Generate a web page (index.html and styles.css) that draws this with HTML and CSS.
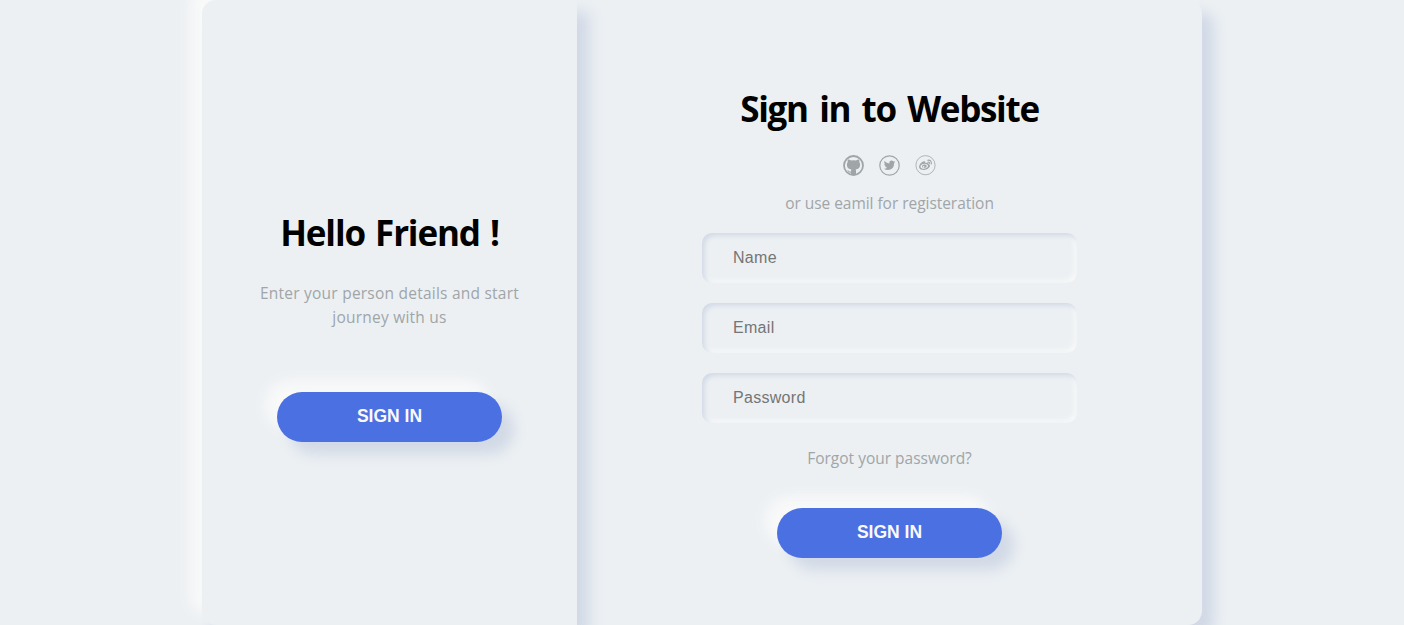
FILE: index.html
```html
<!DOCTYPE html>
<html lang="en">
<head>
<meta charset="utf-8">
<title>Sign in</title>
<link rel="stylesheet" href="styles.css">
</head>
<body>
<main class="shell">
  <section class="welcome">
    <h2 class="title title-welcome">Hello Friend !</h2>
    <p class="description">Enter your person details and start<br>journey with us</p>
    <button class="button" type="button">SIGN IN</button>
  </section>
  <form class="form">
    <h2 class="title title-form">Sign in to Website</h2>
    <div class="icons">
      <svg class="icon" viewBox="0 0 21 21">
        <circle cx="10.5" cy="10.5" r="9.5" fill="none" stroke="currentColor" stroke-width="1.8"/>
        <path fill="currentColor" d="M4.900 4.500Q6.400 4.300 8 5.500Q10.500 5 13 5.500Q14.600 4.300 16.100 4.500Q16.600 5.800 16.300 7Q17.300 8.200 17.100 10.200Q16.700 13.900 12.700 14.500L13 15.700V19.800L10.500 20.300L8 19.800V17.600Q5.900 17.900 4.900 16.100Q4.600 15.500 4 15.300Q5.400 15 6.100 16Q6.800 16.800 8 16.400Q8 15.100 8.400 14.500Q4.300 13.900 3.900 10.200Q3.700 8.200 4.700 7Q4.400 5.800 4.900 4.500Z"/>
      </svg>
      <svg class="icon" viewBox="0 0 21 21">
        <circle cx="10.500" cy="10.500" r="9.700" fill="none" stroke="currentColor" stroke-width="1.200"/>
        <path fill="currentColor" d="M16.200 6.700l-1.300.4q.8-.5 1-1.200l-1.500.5a2.300 2.300 0 0 0-4 2.100Q7.400 8.300 5.500 6Q4.500 7.900 6.200 9.200L5.200 8.900Q5.300 10.600 7.100 11.200L6 11.200Q6.500 12.600 8.200 12.800Q6.700 14 4.800 13.800Q8 15.700 11.400 14.600Q15.200 13.100 15.100 8.100Z"/>
      </svg>
      <svg class="icon" viewBox="0 0 21 21">
        <circle cx="10.500" cy="10.200" r="9.600" fill="none" stroke="currentColor" stroke-width=".8"/>
        <path fill="currentColor" fill-rule="evenodd" d="M8.800 6.300Q10.600 5.800 10.400 8Q13.700 6.900 13.500 9.100Q15.600 9.800 14.600 12Q13.100 14.700 9.200 14.900Q4.300 14.800 4 11.900Q4.500 8 8.800 6.300ZM9.400 8.800C7 8.900 5.400 10.300 5.500 11.700C5.700 13.200 7.200 13.800 9.200 13.700C11.700 13.400 13.200 12.200 13 10.800C12.800 9.400 11.400 8.700 9.400 8.800ZM9.200 9.500C11 9.300 12 10.300 11.600 11.600C11 13 9.300 13.500 7.900 12.800C6.200 11.700 7 9.900 9.200 9.500ZM8.600 10.900A.9.9 0 1 0 8.700 12.700A.9.9 0 0 0 8.600 10.900Z"/>
        <path fill="none" stroke="currentColor" stroke-width="1.1" stroke-linecap="round" d="M12.700 5.200Q16.800 4.700 16.300 9M13 7.100Q14.800 6.900 14.600 8.500"/>
      </svg>
    </div>
    <p class="note">or use eamil for registeration</p>
    <input class="field" type="text" placeholder="Name" aria-label="Name">
    <input class="field" type="text" placeholder="Email" aria-label="Email">
    <input class="field" type="password" placeholder="Password" aria-label="Password">
    <a class="forgot">Forgot your password?</a>
    <button class="button" type="button">SIGN IN</button>
  </form>
</main>
</body>
</html>
```
FILE: styles.css
```css
* { box-sizing: border-box; margin: 0; padding: 0; }
body {
  height: 625px;
  overflow: hidden;
  display: flex;
  justify-content: center;
  background: #ecf0f3;
  color: #a0a5a8;
  font-family: "Open Sans", "Noto Sans", sans-serif;
}
.shell {
  display: flex;
  width: 1000px;
  height: 625px;
  overflow: hidden;
  border-radius: 14px;
  background: #ecf0f3;
  box-shadow: 12px 12px 14px #d1d9e6, -12px -12px 14px #f9f9f9;
}
.welcome {
  display: flex;
  flex-direction: column;
  align-items: center;
  width: 375px;
  height: 625px;
  padding-top: 208px;
  box-shadow: 12px 12px 14px #d1d9e6;
}
.form {
  display: flex;
  flex-direction: column;
  align-items: center;
  width: 625px;
  padding-top: 84px;
}
.title {
  height: 50px;
  line-height: 50px;
  font-size: 35px;
  font-weight: 700;
  color: #000;
  white-space: nowrap;
}
.title-welcome { letter-spacing: -1.15px; word-spacing: 2.2px; }
.title-form { letter-spacing: -1.3px; word-spacing: 3.6px; }
.description {
  margin-top: 23px;
  height: 48px;
  line-height: 24px;
  font-size: 15.5px;
  letter-spacing: 0.23px;
  text-align: center;
  white-space: nowrap;
}
.welcome .button { margin-top: 63px; }
.icons { display: flex; gap: 15px; margin-top: 21px; }
.icon { display: block; width: 21px; height: 21px; }
.note {
  margin: 15px 0 18px;
  height: 24px;
  line-height: 24px;
  font-size: 15.5px;
  letter-spacing: -0.04px;
}
.field {
  width: 375px;
  height: 50px;
  margin-bottom: 20px;
  padding-left: 31px;
  border: 0;
  border-radius: 10px;
  outline: 0;
  background: #ecf0f3;
  box-shadow: inset 2.5px 2.5px 5px #d1d9e6, inset -2.5px -2.5px 5px #f9f9f9;
  font: 16px "Liberation Sans", Arial, sans-serif;
  letter-spacing: 0.3px;
}
.field::placeholder { color: #757575; }
.forgot {
  margin-top: 3px;
  height: 24px;
  line-height: 24px;
  font-size: 15.5px;
}
.form .button { margin-top: 38px; }
.button {
  width: 225px;
  height: 50px;
  padding-bottom: 2px;
  border: 0;
  border-radius: 25px;
  background: #4b70e2;
  box-shadow: 12px 12px 14px #d1d9e6, -12px -12px 14px #f9f9f9;
  color: #f9f9f9;
  font: 700 17.5px "Liberation Sans", Arial, sans-serif;
}
```
